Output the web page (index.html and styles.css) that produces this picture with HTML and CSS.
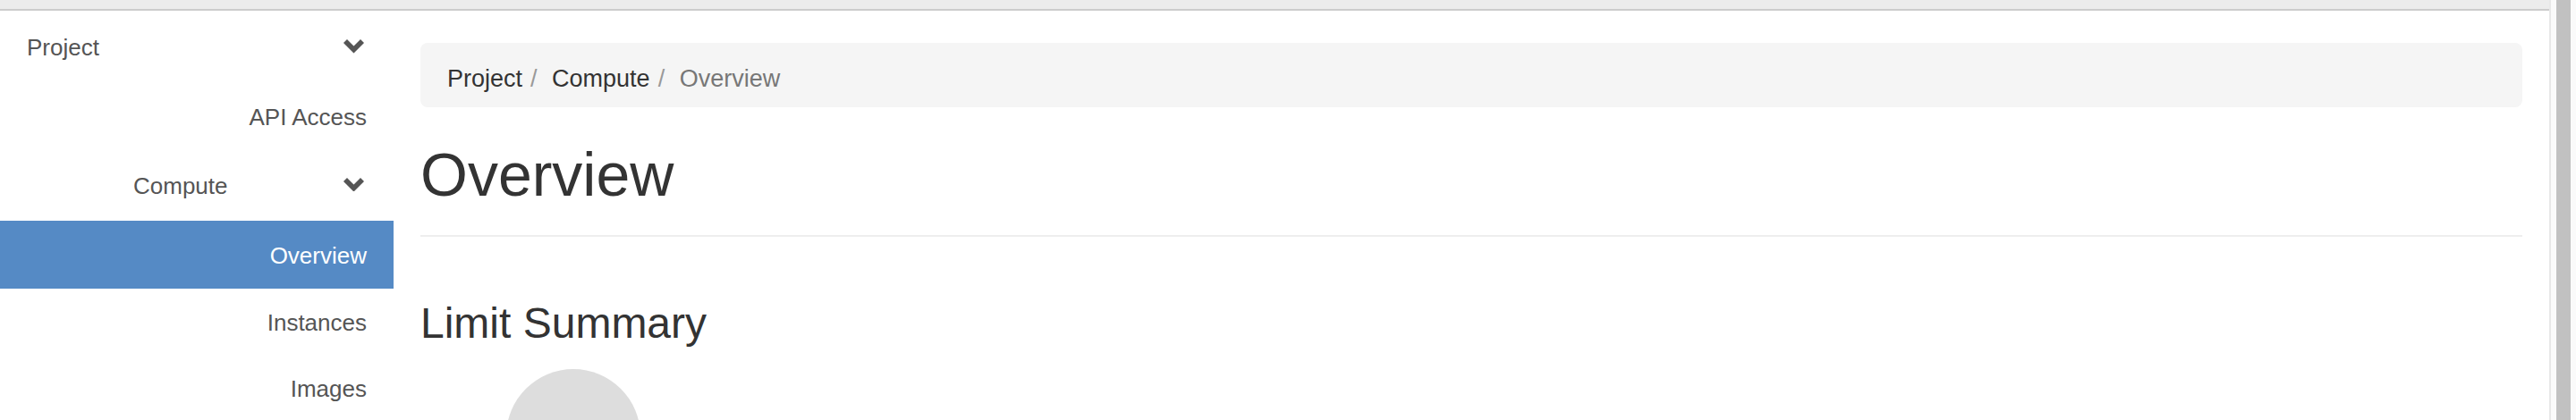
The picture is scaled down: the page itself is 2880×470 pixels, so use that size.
FILE: index.html
```html
<!DOCTYPE html>
<html lang="en">
<head>
<meta charset="utf-8">
<title>Overview</title>
<link rel="stylesheet" href="styles.css">
</head>
<body>
<div class="screen">
  <div class="viewport">
    <div class="topbar"></div>
    <div class="page">
      <nav class="sidebar">
        <div class="nav-row nav-dashboard">
          <span>Project</span>
          <svg class="chevron" viewBox="0 0 23 15.5" width="23" height="15.5" aria-hidden="true"><polygon points="0,4 4,0 11.5,7.5 19,0 23,4 11.5,15.5"/></svg>
        </div>
        <div class="nav-row nav-item nav-h75"><span>API Access</span></div>
        <div class="nav-row nav-group">
          <span>Compute</span>
          <svg class="chevron" viewBox="0 0 23 15.5" width="23" height="15.5" aria-hidden="true"><polygon points="0,4 4,0 11.5,7.5 19,0 23,4 11.5,15.5"/></svg>
        </div>
        <div class="nav-row nav-item nav-active"><span>Overview</span></div>
        <div class="nav-row nav-item nav-h73"><span>Instances</span></div>
        <div class="nav-row nav-item nav-h74"><span>Images</span></div>
      </nav>
      <main class="main">
        <ol class="breadcrumb">
          <li class="crumb">Project</li>
          <li class="crumb crumb-sep">Compute</li>
          <li class="crumb crumb-sep crumb-active">Overview</li>
        </ol>
        <div class="page-header">
          <h1 class="page-title">Overview</h1>
        </div>
        <h3 class="section-title">Limit Summary</h3>
        <div class="pie"></div>
      </main>
    </div>
  </div>
  <div class="scrollbar"><div class="thumb"></div></div>
</div>
</body>
</html>
```
FILE: styles.css
```css
html, body {
  margin: 0;
  padding: 0;
  background: #ffffff;
}
body {
  font-family: "Liberation Sans", Arial, Helvetica, sans-serif;
  width: 2880px;
  height: 470px;
  overflow: hidden;
}
.screen {
  display: flex;
  height: 470px;
  overflow: hidden;
}
.viewport {
  width: 2850px;
  display: flex;
  flex-direction: column;
}
.topbar {
  height: 10px;
  background: #ececec;
  border-bottom: 2px solid #cccccc;
  flex: 0 0 auto;
}
.page {
  display: flex;
  flex: 1 1 auto;
  min-height: 0;
  overflow: hidden;
}
.sidebar {
  width: 440px;
  flex: 0 0 440px;
  display: flex;
  flex-direction: column;
}
.nav-row {
  display: flex;
  align-items: center;
  font-size: 26px;
  color: #555555;
  box-sizing: border-box;
  padding-top: 4px;
}
.nav-dashboard {
  height: 80px;
  padding-left: 30px;
  padding-right: 33px;
  justify-content: space-between;
}
.nav-group {
  height: 80px;
  padding-left: 149px;
  padding-right: 33px;
}
.nav-row .chevron {
  margin-top: -4px;
}
.nav-group .chevron {
  margin-left: auto;
}
.chevron {
  fill: #555555;
  display: block;
}
.nav-item {
  justify-content: flex-end;
  padding-right: 30px;
}
.nav-h75 { height: 75px; }
.nav-h73 { height: 73px; }
.nav-h74 { height: 74px; }
.nav-active {
  height: 77px;
  background: #558ac5;
  color: #ffffff;
}
.main {
  flex: 1 1 auto;
  padding: 36px 30px 0 30px;
  min-width: 0;
}
.breadcrumb {
  list-style: none;
  margin: 0;
  height: 72px;
  box-sizing: border-box;
  padding: 20px 30px 12px 30px;
  background: #f5f5f5;
  border-radius: 8px;
  display: flex;
  font-size: 27px;
  line-height: 40px;
}
.crumb {
  color: #333333;
}
.crumb-sep::before {
  content: "/\00a0";
  padding: 0 9px;
  color: #999999;
}
.crumb-active {
  color: #777777;
}
.page-header {
  margin-top: 37px;
  padding-bottom: 30px;
  border-bottom: 2px solid #eeeeee;
}
.page-title {
  margin: 0;
  font-size: 68px;
  line-height: 76px;
  font-weight: normal;
  color: #333333;
}
.section-title {
  margin: 71px 0 0 0;
  font-size: 48px;
  line-height: 52px;
  font-weight: normal;
  color: #333333;
}
.pie {
  margin: 25px 0 0 96px;
  width: 150px;
  height: 150px;
  border-radius: 50%;
  background: #dddddd;
}
.scrollbar {
  width: 30px;
  flex: 0 0 30px;
  box-sizing: border-box;
  border-left: 2px solid #e8e8e8;
  background: #fafafa;
  padding-left: 6px;
}
.thumb {
  width: 16px;
  height: 470px;
  background: #c1c1c1;
}
```
